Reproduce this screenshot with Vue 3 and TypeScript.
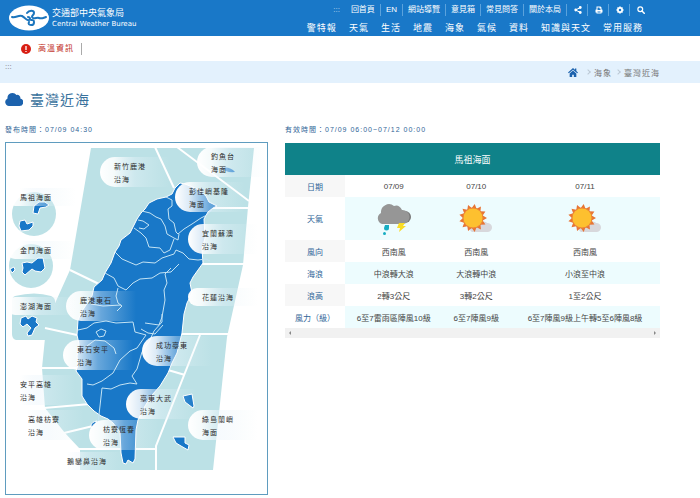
<script setup lang="ts">
interface AreaLabel {
  x: number
  y: number
  lines: string[]
}

interface Forecast {
  date: string
  weather: 'storm' | 'sun'
  wind: string
  wave: string
  height: string
  force: string
}

type TextKey = 'wind' | 'wave' | 'height' | 'force'

const utilityLinks = ['回首頁', 'EN', '網站導覽', '意見箱', '常見問答', '關於本局']
const menu = ['警特報', '天氣', '生活', '地震', '海象', '氣候', '資料', '知識與天文', '常用服務']

const areas: AreaLabel[] = [
  { x: 100, y: 157, lines: ['新竹鹿港', '沿海'] },
  { x: 197, y: 147, lines: ['釣魚台', '海面'] },
  { x: 175, y: 182, lines: ['彭佳嶼基隆', '海面'] },
  { x: 188, y: 224, lines: ['宜蘭蘇澳', '沿海'] },
  { x: 188, y: 288, lines: ['花蓮沿海'] },
  { x: 66, y: 291, lines: ['鹿港東石', '沿海'] },
  { x: 63, y: 340, lines: ['東石安平', '沿海'] },
  { x: 142, y: 336, lines: ['成功臺東', '沿海'] },
  { x: 126, y: 389, lines: ['臺東大武', '沿海'] },
  { x: 89, y: 420, lines: ['枋寮恆春', '沿海'] },
  { x: 188, y: 410, lines: ['綠島蘭嶼', '海面'] },
  { x: 6, y: 375, lines: ['安平高雄', '沿海'] },
  { x: 14, y: 410, lines: ['高雄枋寮', '沿海'] },
  { x: 53, y: 452, lines: ['鵝鑾鼻沿海'] },
  { x: 6, y: 188, lines: ['馬祖海面'] },
  { x: 6, y: 241, lines: ['金門海面'] },
  { x: 6, y: 297, lines: ['澎湖海面'] },
]

const pillPath = (area: AreaLabel): string => {
  const r = area.lines.length > 1 ? 15 : 9
  return `M${area.x + r} ${area.y}h${70 - r}v${r * 2}h${r - 70}a${r} ${r} 0 0 1 0 ${-r * 2}z`
}

const forecasts: Forecast[] = [
  { date: '07/09', weather: 'storm', wind: '西南風', wave: '中浪轉大浪', height: '2轉3公尺', force: '6至7雷雨區陣風10級' },
  { date: '07/10', weather: 'sun', wind: '西南風', wave: '大浪轉中浪', height: '3轉2公尺', force: '6至7陣風9級' },
  { date: '07/11', weather: 'sun', wind: '西南風', wave: '小浪至中浪', height: '1至2公尺', force: '6至7陣風9級上午轉5至6陣風8級' },
]

const rows: { key: TextKey; label: string }[] = [
  { key: 'wind', label: '風向' },
  { key: 'wave', label: '海浪' },
  { key: 'height', label: '浪高' },
  { key: 'force', label: '風力（級）' },
]

const sunRays = Array.from({ length: 26 }, (_, i) => {
  const radius = i % 2 === 0 ? 14 : 10
  const angle = (i * Math.PI) / 13
  return `${(15 + radius * Math.cos(angle)).toFixed(2)},${(15 + radius * Math.sin(angle)).toFixed(2)}`
}).join(' ')
</script>

<template>
  <div class="page">
    <header class="header">
      <a class="brand" href="#">
        <svg class="brand-mark" viewBox="0 0 40 26" aria-hidden="true">
          <ellipse cx="20" cy="13" rx="20" ry="12.5" fill="#fff" />
          <g fill="none" stroke="#1b75bd" stroke-linecap="round">
            <path d="M3 12c4 1 6-2 10-1 4 2 4 5 7 4 2-1 1-3-1-3" stroke-width="2" />
            <path d="M18 8c2-3 7-3 7 0 0 2-2 2-2 4 1 3 5 0 7 1 2 1 4 0 7-1" stroke-width="2" />
            <path d="M22 15c4-1 4 5 0 5-2 0-3-1-2-3" stroke-width="2" />
          </g>
        </svg>
        <span class="brand-text">
          <span class="brand-zh">交通部中央氣象局</span>
          <span class="brand-en">Central Weather Bureau</span>
        </span>
      </a>
      <div class="navs">
        <nav class="utility" aria-label="網站功能">
          <a class="anchor" href="#">:::</a>
          <a v-for="item in utilityLinks" :key="item" class="utility-item" href="#">{{ item }}</a>
          <button class="utility-item" type="button" aria-label="分享">
            <svg viewBox="0 0 16 16"><path d="M13 3 3 8l10 5" fill="none" stroke="#fff" stroke-width="2" /><circle cx="12.500" cy="3" r="2.800" /><circle cx="3.500" cy="8" r="2.800" /><circle cx="12.500" cy="13" r="2.800" /></svg>
          </button>
          <button class="utility-item" type="button" aria-label="列印">
            <svg viewBox="0 0 16 16"><path d="M3 1h8l2 2v4h1q1 0 1 1v5h-2v2H3v-2H1V8q0-1 1-1h1zM5 3v5h6V5H9V3zM5 11v2h6v-2z" fill-rule="evenodd" /></svg>
          </button>
          <button class="utility-item" type="button" aria-label="設定">
            <svg viewBox="0 0 16 16"><path d="M6.500 1h3l.5 2 2-1 2 2-1 2 2 .5v3l-2 .5 1 2-2 2-2-1-.5 2h-3L6 13l-2 1-2-2 1-2-2-.5v-3L3 6 2 4l2-2 2 1zM8 5.500a2.500 2.500 0 1 0 0 5 2.500 2.500 0 0 0 0-5z" fill-rule="evenodd" /></svg>
          </button>
          <button class="utility-item" type="button" aria-label="搜尋">
            <svg viewBox="0 0 16 16"><circle cx="6.500" cy="6.500" r="4.800" fill="none" stroke="#fff" stroke-width="2.400" /><path d="m10 10 4.500 4.500" stroke="#fff" stroke-width="3" stroke-linecap="round" /></svg>
          </button>
        </nav>
        <nav class="menu" aria-label="主選單">
          <a v-for="item in menu" :key="item" href="#">{{ item }}</a>
        </nav>
      </div>
    </header>

    <div class="alert">
      <svg class="alert-icon" viewBox="0 0 10 10" aria-hidden="true">
        <circle cx="5" cy="5" r="5" fill="#d81e13" />
        <path d="M5 2v4M5 7v1" stroke="#fff" stroke-width="1.300" />
      </svg>
      <a class="alert-link" href="#">高溫資訊</a>
    </div>

    <nav class="crumbs" aria-label="目前位置">
      <a class="crumb-anchor" href="#">:::</a>
      <div class="crumb-list">
        <a class="home" href="#" aria-label="首頁">
          <svg viewBox="0 0 18 16"><path d="M9 0 0 8l1.500 1.500L9 3l7.500 6.500L18 8l-3-2.700V1h-2.500v2z" /><path d="M3 10v6h4.500v-4h3v4H15v-6L9 4.500z" /></svg>
        </a>
        <span class="chevron"></span>
        <a href="#">海象</a>
        <span class="chevron"></span>
        <span>臺灣近海</span>
      </div>
    </nav>

    <main class="main">
      <h1 class="title">
        <svg class="title-icon" viewBox="0 0 18 14" aria-hidden="true"><path d="M4 14a4 4 0 0 1-1.500-7.600A5 5 0 0 1 11.500 3a3 3 0 0 1 3.800 3.500A3.800 3.800 0 0 1 14.500 14z" /></svg>
        臺灣近海
      </h1>
      <div class="content">
        <section class="map-panel">
          <p class="time">發布時間：07/09 04:30</p>
          <div class="map-box">
            <svg class="map" viewBox="6 143 261 351" aria-label="臺灣近海地圖">
              <defs>
                <linearGradient id="pill-fade">
                  <stop offset="0" stop-color="#fff" />
                  <stop offset=".2" stop-color="#fff" stop-opacity=".85" />
                  <stop offset=".5" stop-color="#eaf4fb" stop-opacity=".38" />
                  <stop offset="1" stop-color="#e4f3f5" stop-opacity="0" />
                </linearGradient>
              </defs>
              <g class="sea">
                <path d="M91 148H254L248 207 243 265 233 310 227 337 213 470H80V449L65 433 45 408 42 368 46 328 52 310 70 270z" />
                <circle cx="34" cy="214" r="22" />
                <circle cx="31" cy="266" r="22" />
                <path d="M15 296q20-5 36 0 5 2 4 8l-8 36H16q-4-1-4-6v-33q0-4 3-5z" />
              </g>
              <g class="borders">
                <path d="m70 270 29 14M45 328l32 7M41 368h36M44 408l46-4M64 433l29-7M79 449h78M155 147l19 41M177 147l72 54M212 208h37M200 264h44M180 334h49M200 335l-44 111v25M168 370l17 5" />
              </g>
              <g class="land">
                <path d="M180 183 175 188 172 194 166 197 157 199 149 203 145 209 141 213 137 219 132 229 130 233 121 240 119 246 115 252 111 263 105 273 102 280 94 287 92 296 88 302 82 311 78 320 77 335 79 344 77 356 78 365 76 371 82 379 82 396 87 404 94 411 101 416 108 419 113 423 120 432 121 453 123 463 126 464 128 460 133 463 135 459 136 430 138 420 145 406 152 395 160 386 168 373 172 363 177 353 182 333 184 314 187 303 192 293 190 283 193 277 203 263 202 249 205 238 204 219 208 212 213 208 217 206 209 202 206 196 199 190 190 186 185 184z" />
                <path d="M34 206l5-4 6 0 4 3-3 2-6 1-2 6-5-1zM20 221l5-1 2 4 6-2v4l-4 4-8 1-2-5zM22 263l5-1 5 1 6-5h5l2 10-4 4-6-1-3-2-7 6-3-3 1-4zM10 269l4-2 1 3-3 3zM21 318l5-2 2 3 4-3 5 2-1 4 3 3-4 3-3 7-4 1-1-3 4-5-4-4-4 3-3-3z" />
                <path d="M183 396l9-2 2 12-1 2-8-6zM173 437h12v6l4 2-1 5-7-4-5-3zM91 426q0-4 6-5l-2 4-3 3z" />
                <path d="M221 168q9-2 14 4-9 1-14-4z" stroke="none" />
              </g>
              <g class="counties">
                <path d="M166 197l6 3v6l-4 3 1 10 5 4 2 9 2 2 6-5 8-5 9-6 6-3 5-5M142 211l8 2 6 4 5 2 4 7 2 8 7 4 4 2 1-6M138 220l5 1 6 4-5 4-5-1M134 228l7 5 5 5 3 9 11 1 4 5 6-3 4-11M115 252l7 7 14 6 7-3 12 1 7-5 12-4 2-4 7 3 6 6 9 1 8-1 4 2M105 273l9 5 4 8 8 4 7-7 7-4 12-1 8-5 11-1 8-8M118 288l-2 8 2 7 4 3-5 5M91 304l12 2 18-1M171 268l-6 6 2 9-3 7 1 10-3 17-3 8-14-2M78 330l9-2 7-5 12-2 10 2 17-1 2 10 11 3-9 13-7 3-10 9-7 13-11 8-9 4-6-1M96 332l5-3 5 2-2 5-5 1zM87 346l8-6 10 1 9 7 2 6M162 314v8l-8 9-5 11-7 10-5 17-5 7 5 8-7-1-10 2-9 4-9-1-2 18-2 17M141 329l7 4 7 1 8-9" />
              </g>
              <a v-for="area in areas" :key="area.lines[0]" href="#">
                <path :d="pillPath(area)" fill="url(#pill-fade)" />
                <text>
                  <tspan v-for="(line, i) in area.lines" :key="line" :x="area.x + 14" :y="area.y + 12 + i * 13">{{ line }}</tspan>
                </text>
              </a>
            </svg>
          </div>
        </section>

        <section class="forecast">
          <p class="time">有效時間：07/09 06:00~07/12 00:00</p>
          <table>
            <colgroup>
              <col class="col-label" />
              <col class="col-first" />
              <col class="col-second" />
              <col />
            </colgroup>
            <thead>
              <tr><th class="caption" colspan="4" scope="colgroup">馬祖海面</th></tr>
            </thead>
            <tbody>
              <tr>
                <th scope="row">日期</th>
                <td v-for="day in forecasts" :key="day.date">{{ day.date }}</td>
              </tr>
              <tr class="weather-row">
                <th scope="row">天氣</th>
                <td v-for="day in forecasts" :key="day.date">
                  <svg v-if="day.weather === 'storm'" class="weather" viewBox="0 0 36 32" role="img" aria-label="雷雨">
                    <circle cx="29" cy="14" r="6" fill="#777" />
                    <path d="M6 21a6 6 0 0 1-1-11A8 8 0 0 1 18 3q5-2 8 4a7 7 0 0 1 1 14z" fill="#969696" />
                    <path d="M9 22h4v3a2.500 2.500 0 0 1-5 0z" fill="#16adc2" />
                    <circle cx="8.500" cy="30.500" r="1.500" fill="#16adc2" />
                    <path d="M23 20h6l-2 3h3l-7 6 1-4h-3z" fill="#f9dc25" />
                  </svg>
                  <svg v-else class="weather" viewBox="0 0 36 32" role="img" aria-label="晴">
                    <path d="M14 29a4 4 0 0 1 0-7l10-3q4-1 5 1a4.500 4.500 0 0 1 1 9z" fill="#d8d8dc" />
                    <polygon :points="sunRays" fill="#e77535" />
                    <circle cx="15" cy="15" r="10" fill="#fdc02f" stroke="#ed8737" />
                  </svg>
                </td>
              </tr>
              <tr v-for="row in rows" :key="row.key">
                <th scope="row">{{ row.label }}</th>
                <td v-for="day in forecasts" :key="day.date">{{ day[row.key] }}</td>
              </tr>
            </tbody>
          </table>
          <div class="scroll-track" aria-hidden="true">
            <svg viewBox="0 0 4 6"><path d="M3 1v4L1 3z" /></svg>
            <svg viewBox="0 0 4 6"><path d="M1 1v4l2-2z" /></svg>
          </div>
        </section>
      </div>
    </main>
  </div>
</template>

<style>
body {
  margin: 0;
  background: #fff;
}
</style>

<style scoped>
.page {
  font-family: "Liberation Sans", "Noto Sans CJK TC", sans-serif;
  font-size: 8px;
  color: #444;
}

a {
  color: inherit;
  text-decoration: none;
}

.header {
  display: flex;
  justify-content: space-between;
  height: 36px;
  padding: 0 55px 0 9px;
  box-sizing: border-box;
  background: #1978c8;
  color: #fff;
}

.brand {
  display: flex;
  align-items: center;
  gap: 3px;
}

.brand-mark {
  width: 40px;
  height: 26px;
}

.brand-text {
  display: flex;
  flex-direction: column;
  white-space: nowrap;
}

.brand-zh {
  font-size: 9px;
  line-height: 11px;
}

.brand-en {
  font-family: "DejaVu Sans", sans-serif;
  font-size: 7px;
  line-height: 10px;
}

.navs {
  display: flex;
  flex-direction: column;
  align-items: flex-end;
  gap: 4px;
  padding-top: 4px;
}

.utility {
  display: flex;
  align-items: center;
  line-height: 12px;
  white-space: nowrap;
}

.anchor {
  padding-right: 5px;
  opacity: 0.7;
}

.utility-item {
  display: flex;
  align-items: center;
  height: 12px;
  padding: 0 5px;
  border: 0 solid #5ba2dc;
  border-left-width: 1px;
  background: none;
}

.anchor + .utility-item {
  border-left-color: transparent;
}

.utility-item:last-child {
  padding-right: 0;
}

button.utility-item {
  padding-left: 7px;
}

.utility-item svg {
  width: 8px;
  height: 8px;
  fill: #fff;
}

.menu {
  display: flex;
  gap: 12px;
  padding-right: 2px;
  font-size: 9px;
  line-height: 16px;
  letter-spacing: 1px;
  white-space: nowrap;
}

.alert {
  display: flex;
  align-items: center;
  gap: 7px;
  height: 25px;
  padding-left: 21px;
}

.alert-icon {
  width: 10px;
  height: 10px;
}

.alert-link {
  padding-right: 7px;
  border-right: 1px solid #aaa;
  color: #c02a20;
  line-height: 12px;
  letter-spacing: 1px;
}

.crumbs {
  display: flex;
  justify-content: space-between;
  height: 22px;
  padding: 0 40px 0 5px;
  background: #e3f1fd;
  color: #777;
}

.crumb-anchor {
  line-height: 12px;
}

.crumb-list {
  display: flex;
  align-items: center;
  gap: 4px;
  letter-spacing: 1px;
}

.home {
  display: flex;
  margin-right: 4px;
}

.home svg {
  width: 10px;
  height: 9px;
  fill: #1c62ad;
}

.chevron {
  width: 3px;
  height: 3px;
  border: solid #bcc9d5;
  border-width: 1px 1px 0 0;
  transform: rotate(45deg);
}

.main {
  padding: 0 40px 0 5px;
}

.title {
  display: flex;
  align-items: center;
  gap: 7px;
  height: 31px;
  margin: 0;
  color: #38719c;
  font-size: 14px;
  font-weight: 400;
  letter-spacing: 1px;
}

.title-icon {
  width: 18px;
  height: 14px;
  fill: #1c62ad;
}

.content {
  display: grid;
  grid-template-columns: 263fr 375fr;
  gap: 17px;
  align-items: start;
  padding-top: 10px;
}

.time {
  margin: 0 0 6px;
  color: #2f6597;
  font-size: 7px;
  line-height: 12px;
  letter-spacing: 1px;
}

.map-box {
  border: 1px solid #5f9cbf;
}

.map {
  display: block;
  width: 100%;
}

.sea {
  fill: #bce1e6;
}

.borders {
  fill: none;
  stroke: #fff;
  stroke-width: 2px;
}

.land {
  fill: #1978c8;
  stroke: #fff;
  stroke-width: 1px;
  stroke-linejoin: round;
}

.counties {
  fill: none;
  stroke: #c3e3f4;
  stroke-width: 1px;
  stroke-linejoin: round;
}

.map text {
  fill: #2b2b2b;
  font-size: 7px;
  letter-spacing: 1px;
}

table {
  width: 100%;
  margin-top: 7px;
  border-collapse: collapse;
  table-layout: fixed;
  text-align: center;
}

.col-label {
  width: 16%;
}

.col-first {
  width: 26%;
}

.col-second {
  width: 18%;
}

th,
td {
  height: 22px;
  padding: 0;
  box-sizing: border-box;
  font-weight: 400;
  white-space: nowrap;
}

tbody th {
  color: #2f6597;
}

tbody tr:nth-child(odd) th {
  background: #f7f7f7;
}

tbody tr:nth-child(even) td {
  background: #edfcfe;
}

.caption {
  height: 32px;
  background: #0f8289;
  color: #fff;
  font-size: 9px;
}

.weather-row td {
  height: 43px;
}

.weather {
  display: block;
  width: 36px;
  height: 32px;
  margin: 0 auto;
}

.scroll-track {
  display: flex;
  align-items: center;
  justify-content: space-between;
  height: 10px;
  padding: 0 3px;
  background: #f1f1f1;
}

.scroll-track svg {
  width: 4px;
  height: 6px;
  fill: #888;
}
</style>
